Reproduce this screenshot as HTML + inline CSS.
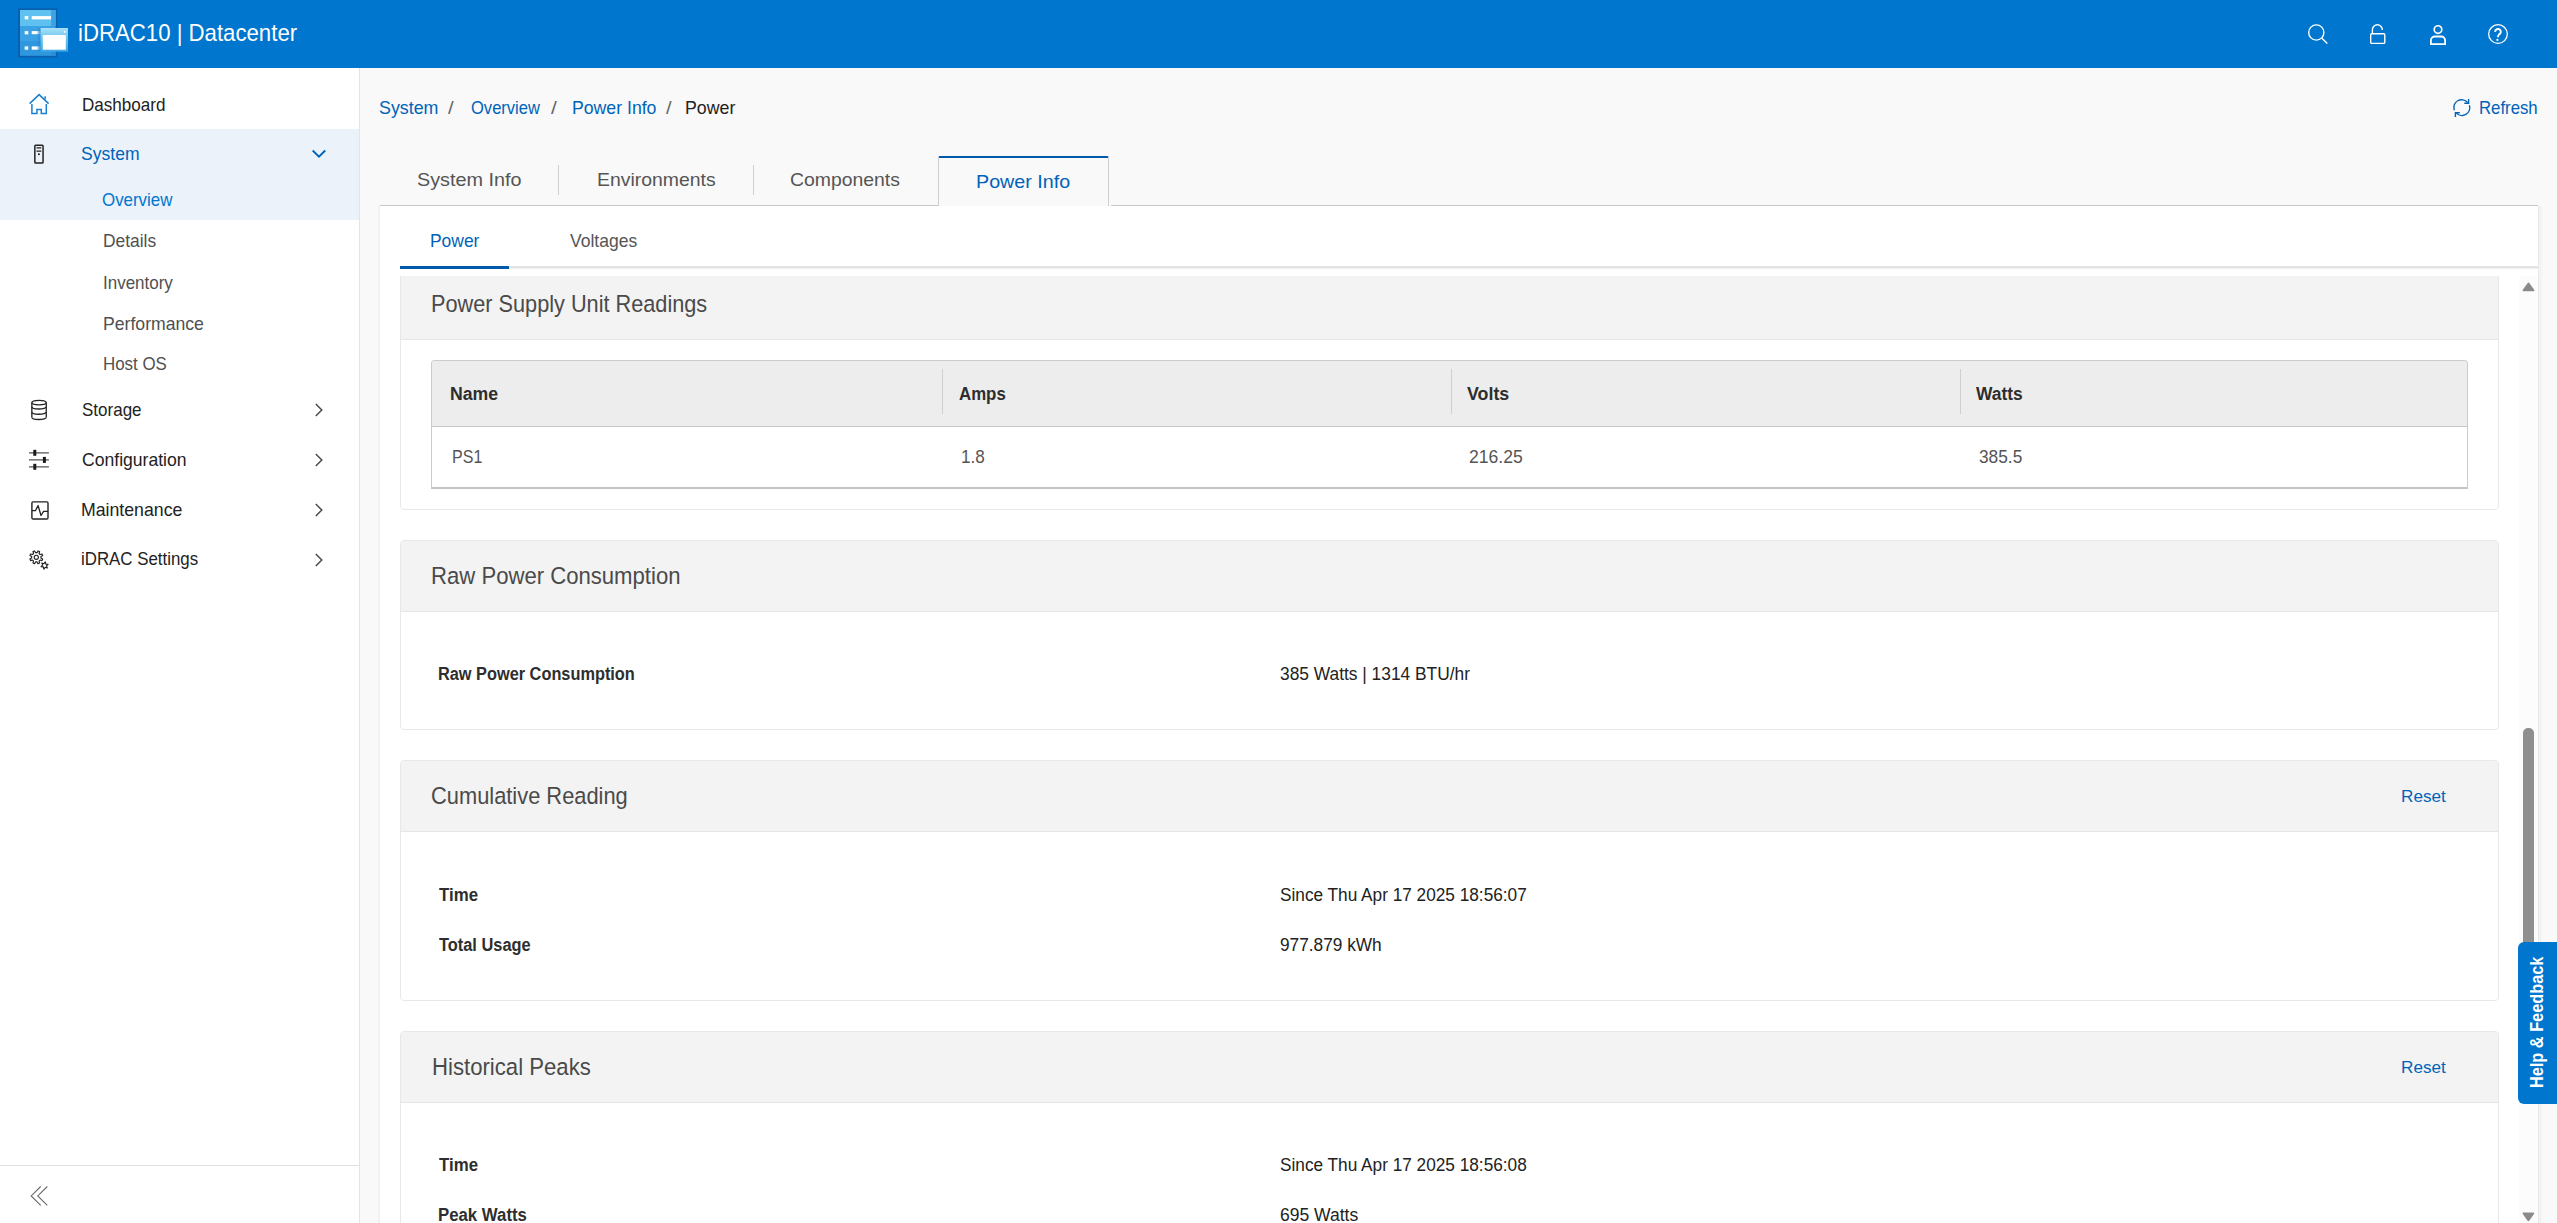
<!DOCTYPE html>
<html><head><meta charset="utf-8">
<title>iDRAC10 | Datacenter - Power</title>
<style>
*{box-sizing:border-box;margin:0;padding:0}
html,body{width:2557px;height:1223px;overflow:hidden;background:#f9f9f9;font-family:"Liberation Sans",sans-serif;color:#222}
.b{position:absolute}
.t{position:absolute;white-space:nowrap;line-height:1}
svg{position:absolute;left:0;top:0;overflow:visible}
</style></head><body>
<!-- header -->
<div class="b" style="left:0;top:0;width:2557px;height:68px;background:#0076ce"></div>
<!-- sidebar -->
<div class="b" style="left:0;top:68px;width:359px;height:1155px;background:#fff"></div>
<div class="b" style="left:359px;top:68px;width:1px;height:1155px;background:#e4e4e4"></div>
<div class="b" style="left:0;top:129px;width:359px;height:91px;background:#ebf2fa"></div>
<div class="b" style="left:0;top:1165px;width:359px;height:1px;background:#e0e0e0"></div>
<!-- main tabs line -->
<div class="b" style="left:380px;top:205px;width:558px;height:1px;background:#c9c9c9"></div>
<div class="b" style="left:1111px;top:205px;width:1427px;height:1px;background:#c9c9c9"></div>
<div class="b" style="left:558px;top:165px;width:1px;height:30px;background:#d0d0d0"></div>
<div class="b" style="left:753px;top:165px;width:1px;height:30px;background:#d0d0d0"></div>
<!-- active tab -->
<div class="b" style="left:938px;top:156px;width:171px;height:50px;border:1px solid #cfcfcf;border-top:2px solid #0059aa;border-bottom:none;border-radius:2px 2px 0 0;background:#f9f9f9"></div>
<!-- panel -->
<div class="b" style="left:380px;top:206px;width:2158px;height:1017px;background:#fff"></div>
<div class="b" style="left:2538px;top:206px;width:1px;height:1017px;background:#e9e9e9"></div>
<div class="b" style="left:2539px;top:206px;width:2px;height:1017px;background:#f2f2f2"></div>
<div class="b" style="left:2541px;top:206px;width:2px;height:1017px;background:#f7f7f7"></div>
<div class="b" style="left:378px;top:206px;width:1px;height:1017px;background:#f4f4f4"></div>
<div class="b" style="left:379px;top:206px;width:1px;height:1017px;background:#efefef"></div>
<!-- subtab underline -->
<div class="b" style="left:400px;top:266px;width:2138px;height:2px;background:#e3e3e3"></div>
<div class="b" style="left:400px;top:268px;width:2138px;height:1px;background:#efefef"></div>
<div class="b" style="left:400px;top:266px;width:109px;height:3px;background:#0059aa"></div>
<!-- scrollbar -->
<div class="b" style="left:2519px;top:276px;width:19px;height:947px;background:#fcfcfc"></div>
<div class="b" style="left:2523px;top:728px;width:11px;height:360px;background:#8f8f8f;border-radius:5px"></div>
<!-- scroll container -->
<div class="b" style="left:400px;top:276px;width:2119px;height:947px;overflow:hidden">
<div class="b" style="left:0;top:-16px;width:2099px;height:250px;border:1px solid #e8e8e8;border-radius:4px;overflow:hidden;background:#fff">
  <div class="b" style="left:0;top:0;width:2097px;height:79px;background:#f3f3f3;border-bottom:1px solid #e6e6e6"></div>
</div>
<div class="b" style="left:0;top:264px;width:2099px;height:190px;border:1px solid #e8e8e8;border-radius:4px;overflow:hidden;background:#fff">
  <div class="b" style="left:0;top:0;width:2097px;height:71px;background:#f3f3f3;border-bottom:1px solid #e6e6e6"></div>
</div>
<div class="b" style="left:0;top:484px;width:2099px;height:241px;border:1px solid #e8e8e8;border-radius:4px;overflow:hidden;background:#fff">
  <div class="b" style="left:0;top:0;width:2097px;height:71px;background:#f3f3f3;border-bottom:1px solid #e6e6e6"></div>
</div>
<div class="b" style="left:0;top:755px;width:2099px;height:400px;border:1px solid #e8e8e8;border-radius:4px;overflow:hidden;background:#fff">
  <div class="b" style="left:0;top:0;width:2097px;height:71px;background:#f3f3f3;border-bottom:1px solid #e6e6e6"></div>
</div>
<!-- table -->
<div class="b" style="left:31px;top:84px;width:2037px;height:129px;border:1px solid #cbcbcb;border-bottom:2px solid #c4c4c4;border-radius:4px 4px 0 0;overflow:hidden;background:#fff">
  <div class="b" style="left:0;top:0;width:2035px;height:66px;background:#ededed;border-bottom:1px solid #c8c8c8"></div>
</div>
<div class="b" style="left:542px;top:93px;width:1px;height:45px;background:#cfcfcf"></div>
<div class="b" style="left:1051px;top:93px;width:1px;height:45px;background:#cfcfcf"></div>
<div class="b" style="left:1560px;top:93px;width:1px;height:45px;background:#cfcfcf"></div>
</div>
<!-- help & feedback -->
<div class="b" style="left:2518px;top:942px;width:45px;height:162px;background:#0076ce;border-radius:6px 0 0 6px"></div>
<div class="t" style="left:2527px;top:1088px;font-size:19px;font-weight:bold;color:#fff;transform-origin:0 0;transform:rotate(-90deg) scaleX(0.858)">Help &amp; Feedback</div>
<svg width="2557" height="1223" viewBox="0 0 2557 1223">
<rect x="18" y="8.3" width="39.4" height="49.3" fill="#0a60ae"/>
<rect x="20" y="10" width="35.6" height="16" fill="#5ec1ef"/>
<rect x="51.1" y="10" width="4.5" height="16" fill="#3ba3e5"/>
<rect x="20" y="26" width="35.6" height="15" fill="#39a1e4"/>
<rect x="20" y="41" width="35.6" height="14.8" fill="#2f97de"/>
<rect x="51.1" y="41" width="4.5" height="14.8" fill="#2a8fd8"/>
<rect x="24.7" y="16.1" width="3.6" height="3.3" fill="#fff"/>
<rect x="24.7" y="31.1" width="3.6" height="3.3" fill="#fff"/>
<rect x="24.7" y="46.4" width="3.6" height="3.3" fill="#fff"/>
<rect x="31.7" y="16.1" width="19.4" height="3.3" fill="#fff"/>
<defs><linearGradient id="bf" x1="0" y1="0" x2="1" y2="0"><stop offset="0.55" stop-color="#fff"/><stop offset="1" stop-color="#fff" stop-opacity="0.2"/></linearGradient><linearGradient id="ws" x1="0" y1="0" x2="1" y2="0"><stop offset="0" stop-color="#1b7fd0" stop-opacity="0"/><stop offset="1" stop-color="#1b7fd0" stop-opacity="0.55"/></linearGradient></defs>
<rect x="31.7" y="31.1" width="9" height="3.1" fill="url(#bf)"/>
<rect x="31.7" y="46.4" width="9" height="3.3" fill="url(#bf)"/>
<rect x="36.5" y="28" width="4.1" height="23.7" fill="url(#ws)"/>
<defs><linearGradient id="wg" x1="0" y1="0" x2="0" y2="1"><stop offset="0" stop-color="#a8e1f7"/><stop offset="0.3" stop-color="#7fcdf1"/><stop offset="1" stop-color="#3ea6e3"/></linearGradient></defs>
<rect x="40.6" y="28" width="27.4" height="23.7" fill="url(#wg)"/>
<rect x="42.8" y="35" width="23" height="14.7" fill="#fff"/>
<rect x="63.9" y="31" width="1.7" height="1.7" fill="#fff"/>
<g fill="none" stroke="#fff" stroke-width="1.4">
<circle cx="2316.3" cy="32.5" r="7.6"/>
<path d="M2321.9,38.2 L2327.3,43.4"/>
<rect x="2370.7" y="33.7" width="14.1" height="9.7" rx="1"/>
<path d="M2372.4,33.7 V29.7 A4.95,4.95 0 0 1 2382.3,29.7 V30.1"/>
<circle cx="2438" cy="29.55" r="3.8" stroke-width="1.7"/>
<path d="M2430.9,44.1 V40.5 A4,4 0 0 1 2434.9,36.5 H2441.1 A4,4 0 0 1 2445.1,40.5 V44.1 Z" stroke-width="1.8"/>
<circle cx="2498" cy="34.05" r="9.35" stroke-width="1.3"/>
<path d="M2495.2,31.9 A2.8,2.8 0 1 1 2500.3,33.4 C2499.1,34.4 2497.9,35 2497.9,37.2" stroke-width="1.9"/>
</g>
<circle cx="2497.4" cy="39.9" r="1.1" fill="#fff"/>
<g fill="none" stroke="#1a7fd0" stroke-width="1.5"><path d="M29.6,103.6 L39.1,94.6 L48.6,103.6"/><path d="M45.1,96.2 V99.6"/><path d="M31.9,104 V113.4 H36.9 V109.4 H41.3 V113.4 H46.3 V104"/></g>
<g fill="none" stroke="#222" stroke-width="1.5">
<rect x="34.85" y="145.15" width="8.2" height="17.9" rx="0.8"/>
<path d="M36.5,147.9 H41.3 M36.5,151.1 H41.3" stroke-width="1.1"/>
<ellipse cx="39.05" cy="402.6" rx="7.2" ry="2.3" stroke-width="1.3"/>
<path d="M31.85,402.6 V417.2 M46.25,402.6 V417.2" stroke-width="1.3"/>
<path d="M31.85,406.7 A7.2,2.3 0 0 0 46.25,406.7" stroke-width="1.3"/>
<path d="M31.85,411.95 A7.2,2.3 0 0 0 46.25,411.95" stroke-width="1.3"/>
<path d="M31.85,417.2 A7.2,2.3 0 0 0 46.25,417.2" stroke-width="1.3"/>
<rect x="31.9" y="501.9" width="16.1" height="17.1" rx="1.2" stroke-width="1.4"/>
<path d="M31.9,510.7 H35.4 L38.1,505.6 L41,515.5 L43.6,511.3 H48" stroke-width="1.3" stroke-linejoin="round"/>
<path d="M37.04,552.66 L37.99,550.92 L39.61,551.59 L39.06,553.50 L40.10,554.54 L42.01,553.99 L42.68,555.61 L40.94,556.56 L40.94,558.04 L42.68,558.99 L42.01,560.61 L40.10,560.06 L39.06,561.10 L39.61,563.01 L37.99,563.68 L37.04,561.94 L35.56,561.94 L34.61,563.68 L32.99,563.01 L33.54,561.10 L32.50,560.06 L30.59,560.61 L29.92,558.99 L31.66,558.04 L31.66,556.56 L29.92,555.61 L30.59,553.99 L32.50,554.54 L33.54,553.50 L32.99,551.59 L34.61,550.92 L35.56,552.66Z" stroke-width="1.15" stroke-linejoin="round"/>
<circle cx="36.3" cy="557.3" r="2.1" stroke-width="1.1"/>
<path d="M45.31,561.87 L45.85,564.07 L48.10,564.30 L46.47,565.86 L47.39,567.93 L45.22,567.30 L43.89,569.13 L43.35,566.93 L41.10,566.70 L42.73,565.14 L41.81,563.07 L43.98,563.70Z" stroke-width="1.15" stroke-linejoin="round"/>
</g>
<circle cx="38.9" cy="154.3" r="1.05" fill="#222"/>
<g stroke="#555" stroke-width="1.3"><path d="M29,452.8 H48.9 M29,459.9 H48.9 M29,466.8 H48.9"/></g>
<g fill="#1a1a1a"><rect x="33.3" y="449.8" width="3" height="6"/><rect x="42.9" y="456.9" width="3" height="6"/><rect x="33.3" y="463.8" width="3" height="6"/></g>
<path d="M312.7,150.5 L318.95,156.6 L325.2,150.5" fill="none" stroke="#0063b8" stroke-width="1.9"/>
<g fill="none" stroke="#4a4a4a" stroke-width="1.5">
<path d="M315.8,404 L321.8,410 L315.8,416"/>
<path d="M315.8,454 L321.8,460 L315.8,466"/>
<path d="M315.8,504 L321.8,510 L315.8,516"/>
<path d="M315.8,554 L321.8,560 L315.8,566"/>
</g>
<g fill="none" stroke="#6a6a6a" stroke-width="1.1"><path d="M40.7,1186.5 L31.2,1195.9 L40.7,1205.3"/><path d="M47.3,1186.5 L37.8,1195.9 L47.3,1205.3"/></g>
<g fill="none" stroke="#0063b8" stroke-width="1.4">
<path d="M2454.3,110.2 A7.8,7.8 0 0 1 2467.6,102.5"/>
<path d="M2469.4,105.3 A7.8,7.8 0 0 1 2456.2,112.9"/>
<path d="M2468.6,99 V103.3 H2464.3"/>
<path d="M2455.4,117 V112.7 H2459.8"/>
</g>
<path d="M2528.5,283.6 L2533.4,290.3 H2523.6 Z" fill="#8a8a8a" stroke="#8a8a8a" stroke-width="2" stroke-linejoin="round"/>
<path d="M2523.6,1213.4 H2533.2 L2528.4,1220.2 Z" fill="#8a8a8a" stroke="#8a8a8a" stroke-width="2" stroke-linejoin="round"/>
</svg>
<div class="t" style="left:77.98px;top:21.00px;font-size:24px;color:#fff;transform-origin:0 0;transform:scaleX(0.9245)">iDRAC10 | Datacenter</div>
<div class="t" style="left:81.98px;top:96.00px;font-size:18.5px;color:#222;transform-origin:0 0;transform:scaleX(0.9225)">Dashboard</div>
<div class="t" style="left:81.20px;top:145.00px;font-size:18.5px;color:#0063b8;transform-origin:0 0;transform:scaleX(0.9493)">System</div>
<div class="t" style="left:102.48px;top:191.00px;font-size:18.5px;color:#0076ce;transform-origin:0 0;transform:scaleX(0.9131)">Overview</div>
<div class="t" style="left:102.96px;top:232.00px;font-size:18.5px;color:#505050;transform-origin:0 0;transform:scaleX(0.9404)">Details</div>
<div class="t" style="left:102.98px;top:274.00px;font-size:18.5px;color:#505050;transform-origin:0 0;transform:scaleX(0.9177)">Inventory</div>
<div class="t" style="left:102.95px;top:315.00px;font-size:18.5px;color:#505050;transform-origin:0 0;transform:scaleX(0.9530)">Performance</div>
<div class="t" style="left:102.99px;top:355.00px;font-size:18.5px;color:#505050;transform-origin:0 0;transform:scaleX(0.9130)">Host OS</div>
<div class="t" style="left:81.90px;top:401.00px;font-size:18.5px;color:#222;transform-origin:0 0;transform:scaleX(0.9193)">Storage</div>
<div class="t" style="left:81.90px;top:451.00px;font-size:18.5px;color:#222;transform-origin:0 0;transform:scaleX(0.9503)">Configuration</div>
<div class="t" style="left:80.94px;top:501.00px;font-size:18.5px;color:#222;transform-origin:0 0;transform:scaleX(0.9566)">Maintenance</div>
<div class="t" style="left:80.99px;top:550.00px;font-size:18.5px;color:#222;transform-origin:0 0;transform:scaleX(0.9115)">iDRAC Settings</div>
<div class="t" style="left:379.30px;top:99.00px;font-size:18.5px;color:#0063b8;transform-origin:0 0;transform:scaleX(0.9640)">System</div>
<div class="t" style="left:448.00px;top:99.00px;font-size:18.5px;color:#666;transform-origin:0 0;transform:scaleX(1.1000)">/</div>
<div class="t" style="left:470.50px;top:99.00px;font-size:18.5px;color:#0063b8;transform-origin:0 0;transform:scaleX(0.8940)">Overview</div>
<div class="t" style="left:550.80px;top:99.00px;font-size:18.5px;color:#666;transform-origin:0 0;transform:scaleX(1.1333)">/</div>
<div class="t" style="left:571.55px;top:99.00px;font-size:18.5px;color:#0063b8;transform-origin:0 0;transform:scaleX(0.9547)">Power Info</div>
<div class="t" style="left:665.80px;top:99.00px;font-size:18.5px;color:#666;transform-origin:0 0;transform:scaleX(1.0833)">/</div>
<div class="t" style="left:685.14px;top:99.00px;font-size:18.5px;color:#222;transform-origin:0 0;transform:scaleX(0.9595)">Power</div>
<div class="t" style="left:2478.89px;top:99.00px;font-size:18.5px;color:#0063b8;transform-origin:0 0;transform:scaleX(0.9057)">Refresh</div>
<div class="t" style="left:417.02px;top:170.00px;font-size:19px;color:#555;transform-origin:0 0;transform:scaleX(1.0424)">System Info</div>
<div class="t" style="left:596.68px;top:170.00px;font-size:19px;color:#555;transform-origin:0 0;transform:scaleX(1.0213)">Environments</div>
<div class="t" style="left:790.30px;top:170.00px;font-size:19px;color:#555;transform-origin:0 0;transform:scaleX(1.0206)">Components</div>
<div class="t" style="left:976.16px;top:172.00px;font-size:19px;color:#0063b8;transform-origin:0 0;transform:scaleX(1.0363)">Power Info</div>
<div class="t" style="left:429.96px;top:232.00px;font-size:18.5px;color:#0063b8;transform-origin:0 0;transform:scaleX(0.9419)">Power</div>
<div class="t" style="left:569.80px;top:232.00px;font-size:18.5px;color:#555;transform-origin:0 0;transform:scaleX(0.9473)">Voltages</div>
<div class="t" style="left:430.51px;top:292.00px;font-size:24.3px;color:#4a4a4a;transform-origin:0 0;transform:scaleX(0.8931)">Power Supply Unit Readings</div>
<div class="t" style="left:431.16px;top:564.00px;font-size:24.3px;color:#4a4a4a;transform-origin:0 0;transform:scaleX(0.9101)">Raw Power Consumption</div>
<div class="t" style="left:431.40px;top:784.00px;font-size:24.3px;color:#4a4a4a;transform-origin:0 0;transform:scaleX(0.8993)">Cumulative Reading</div>
<div class="t" style="left:431.52px;top:1055.00px;font-size:24.3px;color:#4a4a4a;transform-origin:0 0;transform:scaleX(0.9116)">Historical Peaks</div>
<div class="t" style="left:2400.71px;top:788.00px;font-size:17.3px;color:#0063b8;transform-origin:0 0;transform:scaleX(0.9923)">Reset</div>
<div class="t" style="left:2400.71px;top:1059.00px;font-size:17.3px;color:#0063b8;transform-origin:0 0;transform:scaleX(0.9923)">Reset</div>
<div class="t" style="left:449.83px;top:385.00px;font-size:18.3px;color:#2e2e2e;transform-origin:0 0;transform:scaleX(0.9666);font-weight:bold">Name</div>
<div class="t" style="left:958.80px;top:385.00px;font-size:18.3px;color:#2e2e2e;transform-origin:0 0;transform:scaleX(0.9205);font-weight:bold">Amps</div>
<div class="t" style="left:1467.20px;top:385.00px;font-size:18.3px;color:#2e2e2e;transform-origin:0 0;transform:scaleX(0.9752);font-weight:bold">Volts</div>
<div class="t" style="left:1976.20px;top:385.00px;font-size:18.3px;color:#2e2e2e;transform-origin:0 0;transform:scaleX(0.9526);font-weight:bold">Watts</div>
<div class="t" style="left:451.63px;top:448.00px;font-size:18.5px;color:#555;transform-origin:0 0;transform:scaleX(0.8670)">PS1</div>
<div class="t" style="left:961.07px;top:448.00px;font-size:18.5px;color:#555;transform-origin:0 0;transform:scaleX(0.9251)">1.8</div>
<div class="t" style="left:1469.20px;top:448.00px;font-size:18.5px;color:#555;transform-origin:0 0;transform:scaleX(0.9493)">216.25</div>
<div class="t" style="left:1979.00px;top:448.00px;font-size:18.5px;color:#555;transform-origin:0 0;transform:scaleX(0.9347)">385.5</div>
<div class="t" style="left:438.39px;top:665.00px;font-size:18px;color:#2e2e2e;transform-origin:0 0;transform:scaleX(0.9069);font-weight:bold">Raw Power Consumption</div>
<div class="t" style="left:1279.70px;top:665.00px;font-size:18.3px;color:#222;transform-origin:0 0;transform:scaleX(0.9491)">385 Watts | 1314 BTU/hr</div>
<div class="t" style="left:439.00px;top:886.00px;font-size:18px;color:#2e2e2e;transform-origin:0 0;transform:scaleX(0.9358);font-weight:bold">Time</div>
<div class="t" style="left:439.00px;top:936.00px;font-size:18px;color:#2e2e2e;transform-origin:0 0;transform:scaleX(0.9098);font-weight:bold">Total Usage</div>
<div class="t" style="left:1280.02px;top:886.00px;font-size:18.3px;color:#222;transform-origin:0 0;transform:scaleX(0.9421)">Since Thu Apr 17 2025 18:56:07</div>
<div class="t" style="left:1279.70px;top:936.00px;font-size:18.3px;color:#222;transform-origin:0 0;transform:scaleX(0.9441)">977.879 kWh</div>
<div class="t" style="left:439.00px;top:1156.00px;font-size:18px;color:#2e2e2e;transform-origin:0 0;transform:scaleX(0.9358);font-weight:bold">Time</div>
<div class="t" style="left:438.07px;top:1206.00px;font-size:18px;color:#2e2e2e;transform-origin:0 0;transform:scaleX(0.9326);font-weight:bold">Peak Watts</div>
<div class="t" style="left:1280.02px;top:1156.00px;font-size:18.3px;color:#222;transform-origin:0 0;transform:scaleX(0.9421)">Since Thu Apr 17 2025 18:56:08</div>
<div class="t" style="left:1279.70px;top:1206.00px;font-size:18.3px;color:#222;transform-origin:0 0;transform:scaleX(0.9585)">695 Watts</div>
</body></html>
